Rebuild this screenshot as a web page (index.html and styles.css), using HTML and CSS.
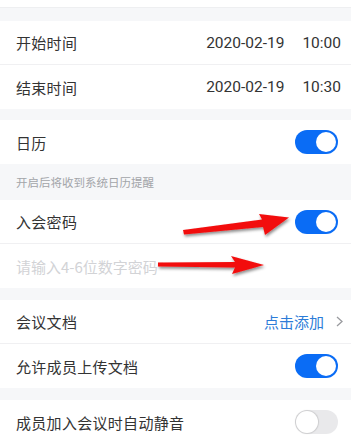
FILE: index.html
```html
<!DOCTYPE html>
<html lang="zh">
<head>
<meta charset="utf-8">
<link rel="stylesheet" href="styles.css">
</head>
<body>
<div class="page">
  <div class="topstrip"></div>
  <div class="gap g13"></div>
  <div class="row divided"><span class="label">开始时间</span><span class="value"><span>2020-02-19</span><span>10:00</span></span></div>
  <div class="row"><span class="label">结束时间</span><span class="value"><span>2020-02-19</span><span>10:30</span></span></div>
  <div class="gap g11"></div>
  <div class="row"><span class="label">日历</span><span class="toggle on"><i></i></span></div>
  <div class="hint">开启后将收到系统日历提醒</div>
  <div class="row divided"><span class="label">入会密码</span><span class="toggle on"><i></i></span></div>
  <div class="row"><span class="placeholder">请输入4-6位数字密码</span></div>
  <div class="gap g12"></div>
  <div class="row divided"><span class="label">会议文档</span><span class="link">点击添加<svg class="chev" width="7" height="11" viewBox="0 0 7 11"><polyline points="1,1 6,5.5 1,10" fill="none" stroke="#9a9b9f" stroke-width="1.3"/></svg></span></div>
  <div class="row"><span class="label">允许成员上传文档</span><span class="toggle on"><i></i></span></div>
  <div class="gap g12"></div>
  <div class="row"><span class="label">成员加入会议时自动静音</span><span class="toggle"><i></i></span></div>

  <svg class="arrows" width="351" height="438" viewBox="0 0 351 438">
    <defs>
      <filter id="sh" x="-20%" y="-50%" width="140%" height="200%">
        <feDropShadow dx="1" dy="2" stdDeviation="1.5" flood-color="#000" flood-opacity="0.45"/>
      </filter>
    </defs>
    <g filter="url(#sh)" fill="#f20d0d" stroke="none">
      <polygon points="183,230 262,219.5 259,214 289,217.5 265,235 263,227 184,234.5"/>
      <polygon points="158,262.5 235,262 231,256 264,265 232,274 235,267.5 158,266.5"/>
    </g>
  </svg>
</div>
</body>
</html>
```

FILE: styles.css
```css
html, body {
  margin: 0;
  padding: 0;
  background: #f6f7f9;
}
.page {
  position: relative;
  width: 351px;
  height: 438px;
  overflow: hidden;
  font-family: "Noto Sans CJK SC", "Roboto", sans-serif;
  color: #333;
}
.topstrip {
  height: 8px;
  background: #fff;
  border-bottom: 1px solid #eeeff1;
  box-sizing: border-box;
}
.gap { background: #f6f7f9; }
.g13 { height: 13px; }
.g12 { height: 12px; }
.g11 { height: 11px; }
.row {
  height: 44px;
  background: #fff;
  display: flex;
  align-items: center;
  justify-content: space-between;
  padding: 0 13px 0 16px;
  box-sizing: border-box;
}
.row.divided { border-bottom: 1px solid #f0f0f2; }
.label {
  font-size: 15px;
  letter-spacing: 0.3px;
}
.value {
  display: flex;
  gap: 18px;
  font-family: "Roboto", "Noto Sans CJK SC", sans-serif;
  font-size: 15.5px;
  margin-right: -3px;
  color: #333;
}
.hint {
  height: 36px;
  display: flex;
  align-items: center;
  padding-left: 16px;
  font-size: 11.5px;
  color: #a3a5a9;
  background: #f6f7f9;
}
.placeholder {
  font-size: 15px;
  color: #d2d3d6;
}
.link {
  display: flex;
  align-items: center;
  font-size: 15px;
  color: #2c7cd8;
  margin-right: -5px;
}
.chev {
  margin-left: 12px;
  display: block;
}
.toggle {
  position: relative;
  width: 43px;
  height: 24px;
  border-radius: 12px;
  background: #e9e9eb;
}
.toggle i {
  position: absolute;
  top: 1px;
  left: 1px;
  width: 22px;
  height: 22px;
  border-radius: 50%;
  background: #fff;
  box-shadow: 0 0 1px 1px rgba(0,0,0,0.12);
  box-sizing: border-box;
}
.toggle.on { background: #0a6cf5; }
.toggle.on i {
  left: auto;
  right: 2px;
  top: 2px;
  width: 20px;
  height: 20px;
  box-shadow: none;
}
.arrows {
  position: absolute;
  left: 0;
  top: 0;
  pointer-events: none;
}
```
